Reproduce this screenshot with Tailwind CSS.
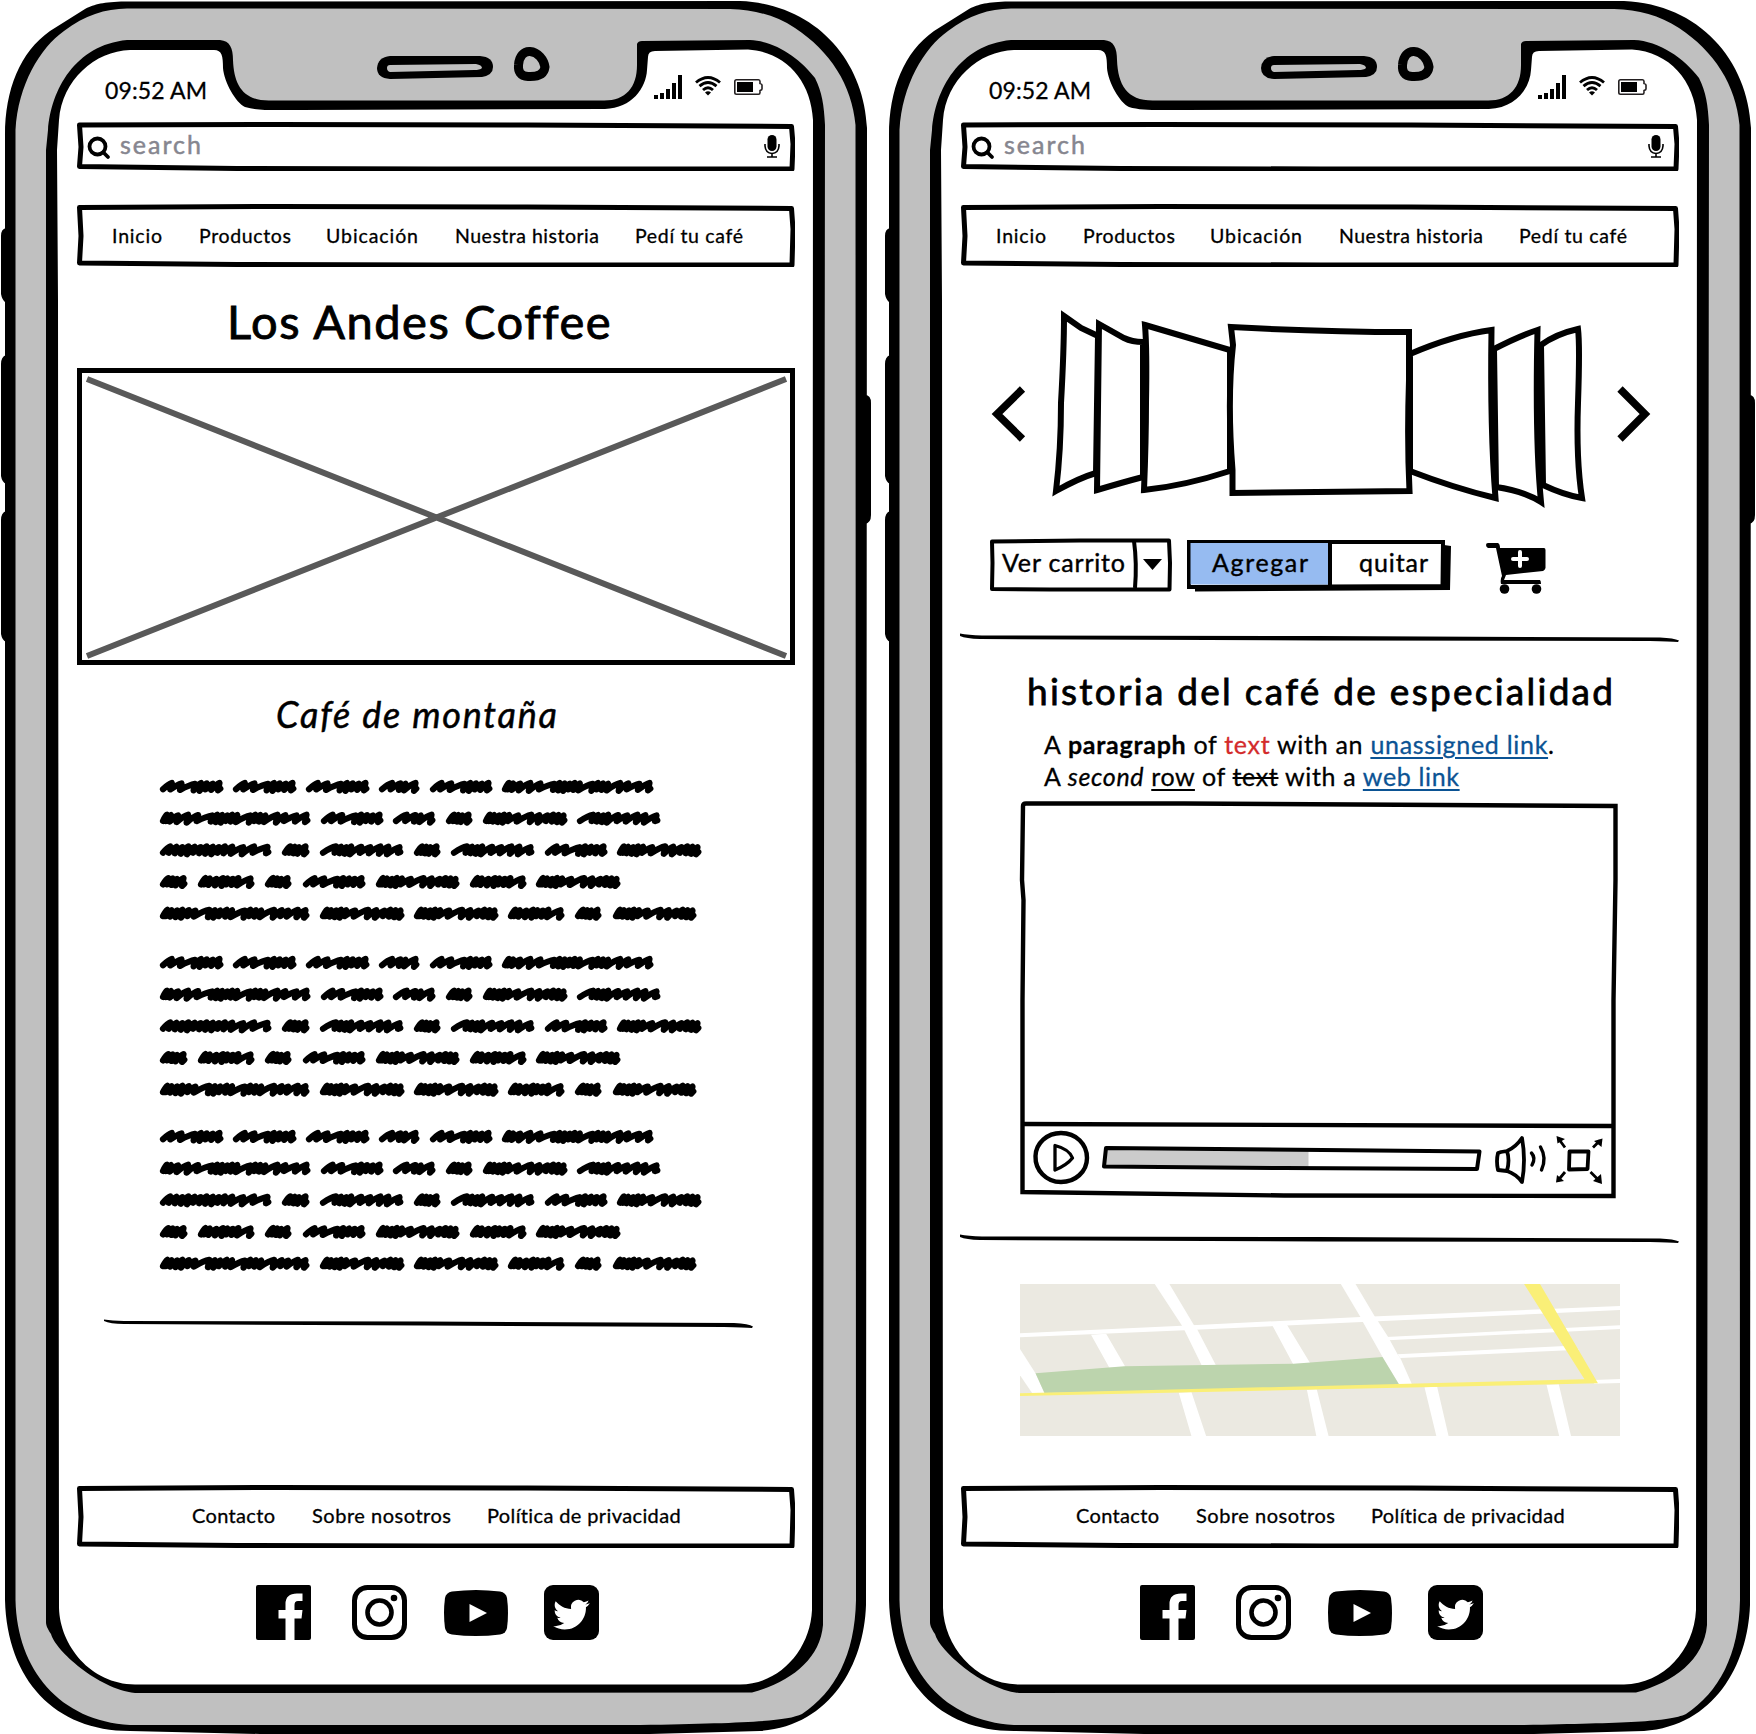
<!DOCTYPE html>
<html lang="es">
<head>
<meta charset="utf-8">
<title>Los Andes Coffee</title>
<script src="https://cdn.jsdelivr.net/npm/@tailwindcss/browser@4"></script>
</head>
<body class="bg-white text-black font-[Lato,sans-serif]">

<svg class="hidden" xmlns="http://www.w3.org/2000/svg">
  <!-- phone body -->
  <symbol id="phone" viewBox="0 0 872 1734">
    <path d="M6 228Q1 229 1 236V294Q2 300 6 303zM6 355Q1 357 1 364V476Q2 482 6 484zM6 511Q1 513 1 520V634Q2 640 6 642zM865 395Q871 395 871 403V515Q871 523 865 524z"/>
    <path d="M125 1.500C103 2 95 4 85 9L50 31C20 52 5 90 5 135V1600C7 1680 55 1731 130 1731L260 1734H650L760 1731C830 1726 864 1665 866 1605L867 128C864 60 815 4 740 1z"/>
    <path fill="#c0c0c0" d="M15.500 130C18 85 40 48 64 31C85 15 105 9 127 8.500L730 9C755 10 775 15 795 28C830 51 852 85 855.500 125L856 1600C855 1655 835 1692 802 1714C785 1722 740 1723 640 1725H130C60 1721 17 1670 15.500 1600z"/>
    <path d="M48 130C51 90 75 45 127 40H220C230 41 233 48 233 60C234 85 243 101 270 100.500H603C625 101 637 88 637 65V44Q638 41 642 41L750 40C775 41 800 58 815 78C822 92 824 105 825 125L823 1625C820 1660 790 1682 752 1692.500L135 1693C98 1689 55 1650 51 1634C47 1628 46 1625 46 1622V150z"/>
    <path fill="#fff" d="M59 120C62 80 95 51 130 50H214C222 50 223 56 223 68C224 82 236 103 245 107C258 111 275 110 300 110L605 109C632 108 646 88 647 70L648 57Q648 51 655 51L748 49.500C785 52 811 80 813 120L812 1610C810 1650 780 1684 740 1684.500H135C90 1684 60 1645 59 1608L58 300L57 150z"/>
    <path d="M390 56H480Q493 57 493 67Q493 75 482 77L390 79Q377 78 377 68Q378 57 390 56z"/>
    <path fill="#c0c0c0" d="M390 65L476 64Q482 65 482 68Q480 70 474 70L390 72Q387 71 387 68Q387 65 390 65z"/>
    <path fill="#c0c0c0" stroke="#000" stroke-width="9" d="M530 51.500C538 52 544 60 545 67C544 75 537 77 528 76.500C520 76 518 71 518.500 65C519 56 524 51 530 51.500z"/>
  </symbol>
  <symbol id="signal" viewBox="0 0 28 24"><path d="M0 20h4v4H0zM6 18h4v6H6zM12 14h4v10h-4zM18 8h4v16h-4zM24 0h4v24h-4z"/></symbol>
  <symbol id="wifi" viewBox="0 0 26 20">
    <g fill="none" stroke="#000" stroke-width="2.900"><path d="M1 6.500Q13-3.500 25 6.500"/><path d="M4.500 10.200Q13 3 21.500 10.200"/><path d="M8 14Q13 9.500 18 14"/></g>
    <path d="M10 16.500Q13 14 16 16.500L13 19.500z"/>
  </symbol>
  <symbol id="battery" viewBox="0 0 29 16">
    <path fill="none" stroke="#231f20" stroke-width="1.600" d="M2.500.8H24.500Q26 .8 26 2.500V4.500Q28 5 28 6V10Q28 11 26 11.500V13.500Q26 15.200 24.500 15.200H2.500Q.8 15.200.8 13.500V2.500Q.8.8 2.500.8z"/>
    <path d="M3 3H19V13H3z"/>
  </symbol>
  <symbol id="lens" viewBox="0 0 24 24"><g fill="none" stroke="#000" stroke-width="3.800" stroke-linecap="round"><circle cx="10.500" cy="10.500" r="8"/><path d="M16.500 16.500L21 21"/></g></symbol>
  <symbol id="mic" viewBox="0 0 16 24">
    <rect x="3.500" y="0" width="9" height="16" rx="4.500"/>
    <path fill="none" stroke="#000" stroke-width="1.600" d="M1 9V11Q1.500 18 8 18.500Q14.500 18 15 11V9M8 18V22M3 22H13"/>
  </symbol>
  <symbol id="box49" viewBox="0 0 718 49"><path fill="none" stroke="#000" stroke-width="5" stroke-linejoin="round" d="M2.500 3L200 2.500L450 3L714.500 4.500L716 22L715 47L360 47L160 46.500L2.500 44.500L4 25z"/></symbol>
  <symbol id="box63" viewBox="0 0 718 63"><path fill="none" stroke="#000" stroke-width="5" stroke-linejoin="round" d="M2.500 3.500L200 2.500L450 3L714.500 4.500L716 25L715 61L360 61L160 60.500L2.500 59L4 32z"/></symbol>
  <symbol id="facebook" viewBox="0 0 55 55"><path d="M2 0H53Q55 0 55 2V53Q55 55 53 55H38.500V33.500H45.500L46.500 25H38.500V20Q38.500 16 42 16H46.500V8.500H41Q29.500 8.500 29.500 19V25H22.500V33.500H29.500V55H2Q0 55 0 53V2Q0 0 2 0z"/></symbol>
  <symbol id="instagram" viewBox="0 0 55 55"><g fill="none" stroke="#000"><rect x="2.500" y="2.500" width="50" height="50" rx="13" stroke-width="5"/><circle cx="27.500" cy="27.500" r="12" stroke-width="4.600"/></g><circle cx="42" cy="13" r="3.300"/></symbol>
  <symbol id="youtube" viewBox="0 0 64 46"><path d="M8 1.500Q32-1.500 56 1.500Q62 2.500 63 8Q65 23 63 38Q62 43.500 56 44.500Q32 47.500 8 44.500Q2 43.500 1 38Q-1 23 1 8Q2 2.500 8 1.500z"/><path fill="#fff" d="M25.500 14V32L43 23z"/></symbol>
  <symbol id="twitter" viewBox="0 0 55 55"><rect width="55" height="55" rx="9"/><path fill="#fff" transform="translate(9.200 11.400) scale(1.520)" d="M23.950 4.570a10 10 0 0 1-2.820.77 4.960 4.960 0 0 0 2.160-2.720c-.95.550-2 .95-3.130 1.180a4.920 4.920 0 0 0-8.380 4.480C7.690 8.090 4.070 6.130 1.640 3.160a4.820 4.820 0 0 0-.67 2.480c0 1.710.87 3.210 2.190 4.100a4.900 4.900 0 0 1-2.230-.62v.06a4.920 4.920 0 0 0 3.950 4.830 5 5 0 0 1-2.210.08 4.940 4.940 0 0 0 4.600 3.420A9.870 9.870 0 0 1 0 19.540a14 14 0 0 0 7.550 2.210c9.050 0 14-7.500 14-13.980 0-.21 0-.42-.02-.63a9.940 9.940 0 0 0 2.460-2.550z"/></symbol>
</svg>

<main class="flex h-[1734px] w-[1756px] gap-3 overflow-hidden">

  <!-- Pantalla: inicio -->
  <section class="relative h-[1734px] w-[872px]">
    <svg class="absolute inset-0 size-full"><use href="#phone"/></svg>
    <div class="relative flex flex-col pl-[77px] pt-[70px]">
      <div class="flex h-10 w-[718px] items-center pl-7 pr-8">
        <span class="flex-1 text-[23px] leading-10 [-webkit-text-stroke:0.3px_#000]"><span data-w="100">09:52 AM</span></span>
        <svg class="mt-[-6px] h-6 w-7"><use href="#signal"/></svg>
        <svg class="ml-[13px] mt-[-8px] h-5 w-[26px]"><use href="#wifi"/></svg>
        <svg class="ml-[13px] mt-[-6px] h-4 w-[29px]"><use href="#battery"/></svg>
      </div>
      <div class="relative mt-3 flex h-[49px] w-[718px] items-center pl-[10px] pr-[15px]">
        <svg class="absolute inset-0 size-full"><use href="#box49"/></svg>
        <svg class="mt-[2px] size-6"><use href="#lens"/></svg>
        <span class="ml-[9px] mt-[-5px] flex-1 text-[25px] leading-8 text-[#86868f] [-webkit-text-stroke:0.5px_#86868f]"><span data-w="79">search</span></span>
        <svg class="h-6 w-4"><use href="#mic"/></svg>
      </div>
      <nav class="relative mt-[33px] flex h-[63px] w-[718px] items-center pl-[35px] text-[19.500px] [-webkit-text-stroke:0.300px_#000]">
        <svg class="absolute inset-0 size-full"><use href="#box63"/></svg>
        <a class="w-[87px] shrink-0"><span data-w="48">Inicio</span></a>
        <a class="w-[127px] shrink-0"><span data-w="90">Productos</span></a>
        <a class="w-[129px] shrink-0"><span data-w="90">Ubicación</span></a>
        <a class="w-[180px] shrink-0"><span data-w="142">Nuestra historia</span></a>
        <a class="shrink-0"><span data-w="106">Pedí tu café</span></a>
      </nav>

      <div class="flex h-[1218px] w-[718px] flex-col">
        <h1 class="mt-6 h-[60px] pl-[150px] text-[47px] leading-[60px] [-webkit-text-stroke:0.900px_#000]"><span data-w="380">Los Andes Coffee</span></h1>
        <svg class="mt-[17px] h-[297px] w-[718px] shrink-0" viewBox="0 0 718 297" fill="none">
          <path stroke="#000" stroke-width="5" d="M2.500 2.500H715.500V294.500H2.500z"/>
          <path stroke="#595959" stroke-width="6" d="M10 11L709 288M10 288L709 11"/>
        </svg>
        <h2 class="mt-[29px] h-10 pl-[199px] text-[36px] italic leading-10 [-webkit-text-stroke:0.500px_#000]"><span data-w="279">Café de montaña</span></h2>
        <div class="mt-[37px] flex flex-col pl-[81px]">
          <svg class="scribble h-[159px] w-[550px]"></svg>
          <svg class="scribble mt-[17px] h-[159px] w-[550px]"></svg>
          <svg class="scribble mt-[15px] h-[159px] w-[550px]"></svg>
        </div>
        <svg class="ml-[27px] mt-[39px] h-3 w-[650px]" viewBox="0 0 650 12"><path d="M0 .5Q8 1.500 20 2L320 2.500L630 4Q645 4.500 649 7.500L648 9Q640 8.500 620 8L320 6.500L20 5Q6 5 0 2z"/></svg>
      </div>

      <footer class="flex w-[718px] flex-col">
        <div class="relative flex h-[63px] items-center pb-1 pl-[115px] text-[20px] [-webkit-text-stroke:0.300px_#000]">
          <svg class="absolute inset-0 size-full"><use href="#box63"/></svg>
          <a class="w-[120px] shrink-0"><span data-w="81">Contacto</span></a>
          <a class="w-[175px] shrink-0"><span data-w="137">Sobre nosotros</span></a>
          <a class="shrink-0"><span data-w="192">Política de privacidad</span></a>
        </div>
        <div class="mt-[37px] flex h-[55px] items-center pl-[179px]">
          <svg class="size-[55px]"><use href="#facebook"/></svg>
          <svg class="ml-[41px] size-[55px]"><use href="#instagram"/></svg>
          <svg class="ml-[37px] h-[46px] w-16"><use href="#youtube"/></svg>
          <svg class="ml-9 size-[55px]"><use href="#twitter"/></svg>
        </div>
      </footer>
    </div>
  </section>

  <!-- Pantalla: carrito e historia -->
  <section class="relative h-[1734px] w-[872px]">
    <svg class="absolute inset-0 size-full"><use href="#phone"/></svg>
    <div class="relative flex flex-col pl-[77px] pt-[70px]">
      <div class="flex h-10 w-[718px] items-center pl-7 pr-8">
        <span class="flex-1 text-[23px] leading-10 [-webkit-text-stroke:0.3px_#000]"><span data-w="100">09:52 AM</span></span>
        <svg class="mt-[-6px] h-6 w-7"><use href="#signal"/></svg>
        <svg class="ml-[13px] mt-[-8px] h-5 w-[26px]"><use href="#wifi"/></svg>
        <svg class="ml-[13px] mt-[-6px] h-4 w-[29px]"><use href="#battery"/></svg>
      </div>
      <div class="relative mt-3 flex h-[49px] w-[718px] items-center pl-[10px] pr-[15px]">
        <svg class="absolute inset-0 size-full"><use href="#box49"/></svg>
        <svg class="mt-[2px] size-6"><use href="#lens"/></svg>
        <span class="ml-[9px] mt-[-5px] flex-1 text-[25px] leading-8 text-[#86868f] [-webkit-text-stroke:0.5px_#86868f]"><span data-w="79">search</span></span>
        <svg class="h-6 w-4"><use href="#mic"/></svg>
      </div>
      <nav class="relative mt-[33px] flex h-[63px] w-[718px] items-center pl-[35px] text-[19.500px] [-webkit-text-stroke:0.300px_#000]">
        <svg class="absolute inset-0 size-full"><use href="#box63"/></svg>
        <a class="w-[87px] shrink-0"><span data-w="48">Inicio</span></a>
        <a class="w-[127px] shrink-0"><span data-w="90">Productos</span></a>
        <a class="w-[129px] shrink-0"><span data-w="90">Ubicación</span></a>
        <a class="w-[180px] shrink-0"><span data-w="142">Nuestra historia</span></a>
        <a class="shrink-0"><span data-w="106">Pedí tu café</span></a>
      </nav>

      <div class="flex h-[1218px] w-[718px] flex-col">
        <!-- coverflow -->
        <svg class="mt-[33px] h-[220px] w-[718px] shrink-0" viewBox="77 300 718 220" fill="#fff" stroke="#000" stroke-width="6">
          <path d="M180 316L197 328L214 336L212 473Q195 478 172 491Q177 450 177 403Q180 350 180 316z"/>
          <path d="M215 324L240 338Q248 342 259 342V477Q240 482 213 490Q214 400 215 324z"/>
          <path d="M261 325L346 350V471Q300 486 260 490Q262 440 262 403Q263 350 261 325z"/>
          <path d="M657 345Q672 334 694 329Q696 345 694 403Q692 460 698 498Q680 495 659 485z"/>
          <path d="M610 349Q635 336 653.500 330Q651 440 657 502Q640 491 612 487z"/>
          <path d="M526 354Q570 335 607.500 330Q606 430 611.500 498Q570 488 526 471z"/>
          <path d="M347 327Q440 332 525 332V380Q523 440 525.500 491L348.500 493V470Q343 400 349 345z"/>
          <path fill="none" stroke-width="7.500" d="M138.500 389L113 414L138.500 439M736 389L761 414L736 439"/>
        </svg>

        <div class="mt-[18px] flex h-[54px] shrink-0 pl-[29px] text-[25px] [-webkit-text-stroke:0.400px_#000]">
          <div class="relative flex h-[54px] w-[182px] items-center pl-[12px]">
            <svg class="absolute inset-0" width="182" height="54" fill="none" stroke="#000" stroke-width="4"><path stroke-linejoin="round" d="M2 3.500L90 2.500L179 2.500L180 25L179.500 51.500L60 51.500L2 51L2.500 25z"/><path d="M144 3Q147 25 145 50"/><path fill="#000" stroke="none" d="M153 21H172L162.500 32z"/></svg>
            <span class="relative mt-[-5px]" data-w="121">Ver carrito</span>
          </div>
          <div class="relative ml-[15px] flex h-[54px] w-[264px] items-center">
            <svg class="absolute inset-0" width="264" height="54"><path d="M8 47V53.500L263 52L264 8L257 7V47z"/><path fill="#fff" stroke="#000" stroke-width="4" d="M2 4L256 4L255.500 48L2 49z"/><path fill="#96bbf1" d="M3.500 5H141V46.500H3.500z"/><path stroke="#000" stroke-width="4" d="M143 4V49"/></svg>
            <div class="relative mt-[-5px] w-[172px] pl-[25px]"><span data-w="94">Agregar</span></div>
            <span class="relative mt-[-5px]" data-w="67">quitar</span>
          </div>
          <svg class="ml-[35px] mt-[5px]" width="62" height="52">
            <path d="M0 2Q0 0 2 0H12Q14 1 14 5L58 5Q59.500 5 59.500 7V25Q59 27 57 28L20 32L18 37H54Q55 38 55 41H15Q14 36 16 33L10 5H2Q0 4 0 2z"/>
            <ellipse cx="18.500" cy="46" rx="4.800" ry="4.800"/><ellipse cx="50.500" cy="46" rx="4.800" ry="4.800"/>
            <path stroke="#fff" stroke-width="4" stroke-linecap="round" d="M34 9V23M27 16H41"/>
          </svg>
        </div>

        <svg class="ml-[-1px] mt-[41px] h-3 w-[720px] shrink-0" viewBox="0 0 720 12"><path d="M0 .5Q8 2 22 2.500L360 3L700 4.500Q714 5 719 7.500L718 9Q710 8.500 690 8L360 7.500L20 6Q6 5.500 0 3z"/></svg>

        <h2 class="mt-[24px] h-[44px] pl-[66px] text-[37px] leading-[44px] [-webkit-text-stroke:0.800px_#000]"><span data-w="584">historia del café de especialidad</span></h2>
        <div class="mt-[15px] flex flex-col pl-[83px] text-[25px] leading-[32px] [-webkit-text-stroke:0.300px_currentColor]">
          <p><span data-w="508">A <b>paragraph</b> of <span class="text-[#d32b2b]">text</span> with an <a class="text-[#0b5394] underline decoration-2 underline-offset-[3px]">unassigned link</a>.</span></p>
          <p><span data-w="413">A <i>second</i> <u class="decoration-2 underline-offset-[3px]">row</u> of <s class="decoration-2">text</s> with a <a class="text-[#0b5394] underline decoration-2 underline-offset-[3px]">web link</a></span></p>
        </div>

        <!-- video -->
        <svg class="ml-[58px] mt-[6px] h-[402px] w-[604px] shrink-0" viewBox="135 798 604 402" fill="none" stroke="#000" stroke-width="4.400">
          <path d="M139 806Q139 803.500 142 803.500L300 803.500L731.500 806V880L729.500 1000V1196L400 1195.500L138.500 1192V1000L139.500 900L138 880z"/>
          <path d="M138 1124L730 1126"/>
          <path d="M177 1133C192 1133 203 1144 203 1158C203 1172 191 1182 177 1182C162 1182 151 1170 151.500 1156C152 1143 163 1133 177 1133z"/>
          <path stroke-width="3.300" stroke-linejoin="round" d="M171 1145.500Q185 1149 188.500 1158Q183 1165 171 1170z"/>
          <path fill="#cbcbcb" stroke="none" d="M222 1148H424.500V1168H221z"/>
          <path stroke-width="4" stroke-linejoin="round" d="M222 1148L595.500 1151.500L593 1169L400 1168L220 1166.500z"/>
          <path stroke-width="3.800" stroke-linejoin="round" d="M614 1153Q612 1161 614 1170L623 1171Q626 1160 623 1151L617 1152zM623 1151Q632 1147 638 1138Q642 1160 638 1182Q632 1174 623 1171"/>
          <path stroke-width="3.400" stroke-linecap="round" d="M647.500 1153Q652 1158 648 1165M656.500 1147Q663 1158 657.500 1170"/>
          <path stroke-width="3.800" stroke-linejoin="round" d="M685.500 1151.500H704.500L703.500 1169L685 1169.500z"/>
          <path stroke-width="2.800" d="M681 1147.500L674 1138M709 1147.500L716 1140.500M681 1172L674 1180.500M706.500 1172L716 1181.500"/>
          <path fill="#000" stroke="none" d="M672.500 1136L681 1139L673.500 1143.500zM718.500 1138.500L710 1141L717.500 1147zM672 1182.500L673 1175L680 1181zM718 1184L717 1174L709 1181z"/>
        </svg>

        <svg class="ml-[-1px] mt-[34px] h-3 w-[720px] shrink-0" viewBox="0 0 720 12"><path d="M0 .5Q8 2 22 2.500L360 3L700 4.500Q714 5 719 7.500L718 9Q710 8.500 690 8L360 7.500L20 6Q6 5.500 0 3z"/></svg>

        <!-- mapa -->
        <svg class="ml-[59px] mt-[38px] h-[152px] w-[600px] shrink-0" viewBox="49 72 1470 456" preserveAspectRatio="none">
          <path fill="#ebe9e1" d="M49 72H1519V528H49z"/>
          <g fill="#fff">
            <path d="M379 72H415L475 195L483 208L529 316H494L452 211L446 197z"/>
            <path d="M835 72H871L919 171L926 184L951 231L974 283L981 295L1009 372H977L937 290L888 184L883 171z"/>
            <path d="M49 220L446 197L883 171L1519 138V150L926 184L452 211L49 232z"/>
            <path d="M223 224L260 221L307 320L268 323zM667 196L703 194L760 310L718 312z"/>
            <path d="M946 231L1519 196V207L951 241zM974 283L1385 258L1420 269L981 294z"/>
            <path d="M49 267L87 340L109 400H79L49 346z"/>
            <path d="M438 398L469 396L505 528H469zM752 390L776 388L805 528H775zM1040 382L1071 380L1099 528H1069zM1339 374L1369 373L1399 528H1370zM1455 360L1519 357V369L1455 371z"/>
          </g>
          <path fill="#bcd4ad" d="M87 340L305 319L720 311L937 291L977 372L960 377L109 399z"/>
          <path fill="#faef77" d="M49 400L1432 358L1284 72H1323L1465 370L49 408z"/>
        </svg>
      </div>

      <footer class="flex w-[718px] flex-col">
        <div class="relative flex h-[63px] items-center pb-1 pl-[115px] text-[20px] [-webkit-text-stroke:0.300px_#000]">
          <svg class="absolute inset-0 size-full"><use href="#box63"/></svg>
          <a class="w-[120px] shrink-0"><span data-w="81">Contacto</span></a>
          <a class="w-[175px] shrink-0"><span data-w="137">Sobre nosotros</span></a>
          <a class="shrink-0"><span data-w="192">Política de privacidad</span></a>
        </div>
        <div class="mt-[37px] flex h-[55px] items-center pl-[179px]">
          <svg class="size-[55px]"><use href="#facebook"/></svg>
          <svg class="ml-[41px] size-[55px]"><use href="#instagram"/></svg>
          <svg class="ml-[37px] h-[46px] w-16"><use href="#youtube"/></svg>
          <svg class="ml-9 size-[55px]"><use href="#twitter"/></svg>
        </div>
      </footer>
    </div>
  </section>
</main>

<script>
  // Placeholder copy: every word is one pen stroke, given by the widths of its zigzags.
  const strokes = {
    A: [9, 10, 14, 6, 6, 6, 7], B: [12, 10, 6, 12], D: [5, 4, 4, 6],
    C: [4, 4, 7, 10, 10, 14, 5, 5, 5, 5, 5, 13, 5, 5, 5, 12, 8, 11, 10],
    E: [4, 4, 5, 5, 5, 9, 13, 8, 8, 6, 5, 5], F: [13, 5, 5, 5, 10, 9, 10, 8, 11],
    G: [6, 5, 5, 5, 5, 5, 5, 5, 5, 5, 6, 9, 9, 11], H: [4, 4, 6, 6, 4, 5, 5, 11],
    I: [4, 4, 5, 5, 6, 6, 13, 5, 5, 6, 5, 12, 5, 5, 5, 12, 7, 6, 9, 7]
  };
  const rows = [
    [['A',0,65],['A',73,138],['A',146,211],['B',219,261],['A',270,334],['C',342,495]],
    [['C',0,152],['A',161,225],['B',233,277],['D',286,314],['E',323,409],['F',417,502]],
    [['G',0,113],['D',122,151],['F',160,245],['D',254,282],['F',291,376],['A',385,449],['E',457,543]],
    [['D',0,29],['H',38,96],['D',105,133],['A',143,207],['E',216,301],['H',310,368],['E',376,462]],
    [['I',0,151],['E',160,246],['E',254,340],['H',348,406],['D',415,443],['E',453,538]]
  ];
  function word(type, from, to, y) {
    const steps = strokes[type], x0 = from + 4, total = steps.reduce((a, b) => a + b, 0);
    const k = (to - 4.500 - x0) / total;
    let x = x0, d = `M${x} ${y + 2.500}`;
    steps.forEach((s, i) => {
      x += s * k;
      const top = y - 3.800 + (i * 7 % 3) * .4, low = y + 2.600 + (i * 5 % 4) * .500;
      d += `Q${(x - s * k * .4).toFixed(1)} ${(top + 1).toFixed(1)} ${x.toFixed(1)} ${top.toFixed(1)}L${(x - 1.500).toFixed(1)} ${low.toFixed(1)}`;
    });
    return d + `L${x + .8} ${y + 1.800}`;
  }
  document.querySelectorAll('.scribble').forEach(svg => {
    const d = rows.map((r, i) => r.map(([t, a, b]) => word(t, a + 1, b + 1, 15.800 + i * 31.700)).join('')).join('');
    svg.innerHTML = `<path fill="none" stroke="#000" stroke-width="6.200" stroke-linecap="round" stroke-linejoin="round" d="${d}"/>`;
  });

  // Track each label to its set width once the stylesheet and fonts are ready.
  function track() {
    document.querySelectorAll('[data-w]').forEach(el => {
      el.style.whiteSpace = 'nowrap';
      el.style.letterSpacing = '0px';
      const natural = el.getBoundingClientRect().width;
      el.style.letterSpacing = (el.dataset.w - natural + 2) / (el.textContent.length - 1) + 'px';
    });
  }
  addEventListener('load', () => document.fonts.ready.then(() => requestAnimationFrame(track)));
</script>
</body>
</html>
